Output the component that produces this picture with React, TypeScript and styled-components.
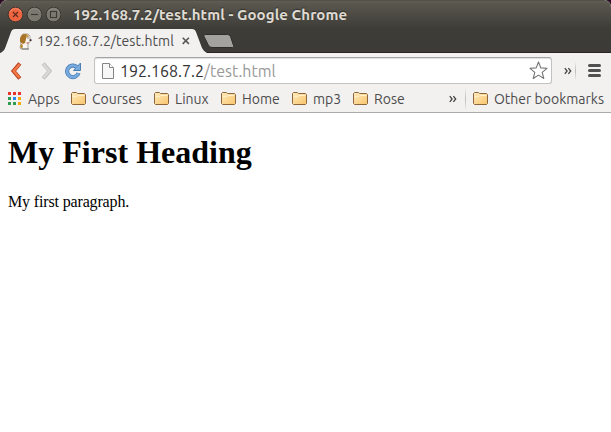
import React from 'react';
import styled, { createGlobalStyle } from 'styled-components';

const Global = createGlobalStyle`
  * { box-sizing: border-box; }
  html, body { margin: 0; background: #fff; overflow: hidden; }
  svg { display: block; flex: none; }
`;

const Browser = styled.div`
  width: 611px;
  height: 432px;
  display: flex;
  flex-direction: column;
  background: #fff;
  font-family: Ubuntu, 'Open Sans', 'Noto Sans', sans-serif;
  color: #4c4c4c;
`;

const Frame = styled.header`
  height: 53px;
  flex: none;
  background: linear-gradient(#46443e 0, #605d53 1px, #59564e 4px, #3d3c37 29px, #3c3b37 52px, #2b2522 52px);
  border-radius: 7px 7px 0 0;
  box-shadow: 0 0 0 8px #2b0a24;
  clip-path: inset(0);
`;

const TitleBar = styled.div`
  height: 29px;
  display: flex;
  align-items: center;
  padding: 1px 0 0 7px;
`;

const WindowButtons = styled.div`
  display: flex;
  gap: 3px;
  margin-right: 12px;
`;

const Label = styled.span<{ $size?: number; $width: number; $spacing?: number }>`
  display: block;
  flex: none;
  width: ${p => p.$width}px;
  font-size: ${p => p.$size ?? 14}px;
  letter-spacing: ${p => p.$spacing ?? 0}px;
  line-height: 20px;
  white-space: nowrap;
`;

const Title = styled(Label)`
  color: #dfdbd2;
  font-weight: 700;
  text-shadow: 0 -1px 1px #302e29;
`;

const TabStrip = styled.div`
  height: 24px;
  display: flex;
`;

const Tab = styled.div`
  width: 203px;
  height: 24px;
  display: grid;
  > * { grid-area: 1 / 1; }
`;

const TabContent = styled.div`
  display: flex;
  align-items: center;
  padding-left: 18px;
  gap: 4px;
`;

const Toolbar = styled.div`
  height: 33px;
  flex: none;
  background: #f2f1f0;
  display: flex;
  align-items: flex-start;
  padding: 4px 9px 0 8px;
`;

const Navigation = styled.div`
  display: flex;
  width: 86px;
  flex: none;
  padding-top: 5px;
  gap: 12px;
`;

const AddressBar = styled.div`
  width: 458px;
  height: 27px;
  flex: none;
  display: flex;
  align-items: center;
  background: #fff;
  border: 1px solid #c3c2c1;
  border-top-color: #a5a4a3;
  border-radius: 3px;
  padding: 0 3px 0 7px;
  box-shadow: inset 0 1px 1px #dedede;
`;

const Url = styled(Label)`
  color: #333;
  margin-left: 6px;
  span { color: #999; }
`;

const Star = styled.div`
  margin-left: auto;
`;

const ToolbarEnd = styled.div`
  display: flex;
  align-items: center;
  height: 27px;
  padding-left: 12px;
`;

const Divider = styled.i<{ $height: number }>`
  width: 1px;
  height: ${p => p.$height}px;
  flex: none;
  background: linear-gradient(#eee, #b9bcbd 50%, #eee);
`;

const BookmarksBar = styled.nav`
  height: 27px;
  flex: none;
  display: flex;
  align-items: center;
  padding: 0 0 1px 8px;
  background: #f2f1f0;
  border-bottom: 1px solid #aaa9a8;
`;

const Bookmark = styled.div<{ $gap?: number; $before?: number; $after?: number }>`
  display: flex;
  align-items: center;
  gap: ${p => p.$gap ?? 6}px;
  margin-left: ${p => p.$before ?? 0}px;
  margin-right: ${p => p.$after ?? 12}px;
`;

const Overflow = styled.div<{ $before?: number; $after: number }>`
  margin-left: ${p => p.$before ?? 0}px;
  margin-right: ${p => p.$after}px;
`;

const Page = styled.main`
  flex: 1;
  padding: 8px;
  color: #000;
  font-family: 'Liberation Serif', serif;
  h1 { font-size: 32px; line-height: 37px; margin: 13px 0 22px; letter-spacing: 0.02px; }
  p { font-size: 16px; line-height: 18px; margin: 0; letter-spacing: -0.15px; }
`;

const WindowButton = ({ kind }: { kind: 'close' | 'min' | 'max' }) => (
  <svg width="16" height="16" viewBox="0 0 16 16" fill="none">
    <circle cx="8.500" cy="7.500" r="7.4" fill={kind === 'close' ? '#ed6440' : '#7b7870'} stroke="#393731" />
    <path d="M3 5a6.2 6.2 0 0 1 11 0" stroke={kind === 'close' ? '#f6876a' : '#8c8981'} />
    {kind === 'close' && <path d="m6 5 5 5m0-5-5 5" stroke="#5c2a1c" strokeWidth="1.1" />}
    {kind === 'min' && <path d="M5 7.500h7" stroke="#3b3934" strokeWidth="1.1" />}
    {kind === 'max' && <path d="M5.500 4.500h6v6h-6z" stroke="#3b3934" strokeWidth="1.1" />}
  </svg>
);

const Folder = () => (
  <svg width="15" height="14" viewBox="0 0 15 14">
    <defs>
      <linearGradient id="folderFill" x2="1" y2="1">
        <stop stopColor="#ffebbd" /><stop offset="1" stopColor="#f8c46c" />
      </linearGradient>
    </defs>
    <path d="M.5 11.500V1.500L1.500.5h4l1 1h7l1 1v9l-1 1h-12z" fill="url(#folderFill)" stroke="#8d663d" />
    <path d="M1.500 4.500h4.200l1-1h6.800" fill="none" stroke="#fff0cc" />
  </svg>
);

const Chevrons = () => (
  <svg width="8" height="8" viewBox="0 0 8 8" fill="none" stroke="#444" strokeWidth="1.3">
    <path d="m.8 1.200 2.300 2.800-2.300 2.800m3.600-5.600 2.300 2.800-2.300 2.800" />
  </svg>
);

const Dog = () => (
  <svg width="15" height="17" viewBox="0 0 15 17">
    <path d="M5 1h5l2 2v3l1 1-1 2-2 1v6H3l-1-1 1-5 1-3z" fill="#f7f5ee" stroke="#77716a" strokeWidth=".6" />
    <path d="M4 1.500 8 1l1 1-1 4-1 4-2 1-3-2V5z" fill="#a87326" />
    <path d="M3 11 2 14l2 2 1-3-1-2z" fill="#b98b3b" />
    <path d="M8 1.500h2l1 2-2 1z" fill="#c99b4f" />
    <path d="M9.500 4.500h1v1h-1zm2 1.800H13.500V8h-2z" fill="#433" />
    <path d="M8.500 9.500h2v1h-2z" fill="#c4482e" />
    <path d="M4 16h7" stroke="#777" />
  </svg>
);

const Back = () => (
  <svg width="15" height="18" viewBox="0 0 15 18" fill="none">
    <path d="M11.800 1.500 5.500 9l6.300 7.500" stroke="#b84222" strokeWidth="4" />
    <path d="M11.500 2.300 5.700 9l5.800 6.700" stroke="#f37a45" strokeWidth="2.200" />
  </svg>
);

const Forward = () => (
  <svg width="17" height="18" viewBox="0 0 17 18" fill="none">
    <path d="M8.200 1.500 14.500 9l-6.300 7.500" stroke="#c3c2c0" strokeWidth="4" />
    <path d="M8.500 2.300 14.300 9l-5.800 6.700" stroke="#d9d8d6" strokeWidth="2.400" />
  </svg>
);

const Reload = () => (
  <svg width="18" height="18" viewBox="0 0 18 18" fill="none">
    <path d="M12.800 5A5.800 5.800 0 1 0 14.500 11" stroke="#4a80b7" strokeWidth="4.200" />
    <path d="M16.500 1v7.500H9.500l2.500-2.800z" fill="#78aadd" stroke="#4a80b7" />
    <path d="M13 5.200A5.800 5.800 0 1 0 14.400 11.300" stroke="#78aadd" strokeWidth="2.600" />
  </svg>
);

const AppsIcon = () => (
  <svg width="13" height="14" viewBox="0 0 13 14">
    <path d="M0 0h3v3H0zM5 0h3v3H5zM10 0h3v3h-3z" fill="#e8322d" />
    <path d="M0 5h3v3H0zM0 10h3v3H0zM5 10h3v3H5z" fill="#2d9b50" />
    <path d="M5 5h3v3H5z" fill="#268bec" />
    <path d="M10 5h3v3h-3zM10 10h3v3h-3z" fill="#f5a90a" />
  </svg>
);

const folders = [
  { name: 'Courses', width: 50 },
  { name: 'Linux', width: 34 },
  { name: 'Home', width: 38 },
  { name: 'mp3', width: 28 },
  { name: 'Rose', width: 31 },
];

export default function App() {
  return (
    <>
      <Global />
      <Browser>
        <Frame>
          <TitleBar>
            <WindowButtons>
              <WindowButton kind="close" /><WindowButton kind="min" /><WindowButton kind="max" />
            </WindowButtons>
            <Title as="div" $size={15} $spacing={0.08} $width={274}>192.168.7.2/test.html - Google Chrome</Title>
          </TitleBar>
          <TabStrip>
            <Tab>
              <svg width="207" height="24" viewBox="0 0 207 24" overflow="visible">
                <path d="M0 24C5 22 5 19 7 14L11 3q1-3 4-3h177q3 0 4 3l6 16q2 4 5 5z" fill="#f2f1f0" />
              </svg>
              <TabContent>
                <Dog />
                <Label $width={137} $spacing={0.03}>192.168.7.2/test.html</Label>
                <svg width="20" height="10" viewBox="0 0 20 10" stroke="#555" strokeWidth="1.500">
                  <path d="m4.700 1.700 6.200 6.200m0-6.200-6.200 6.200" />
                </svg>
              </TabContent>
            </Tab>
            <svg width="32" height="24" viewBox="0 0 32 24">
              <path d="M2.500 5.500h22q2 0 3 2l3 9q1 2-1 2H9q-3 0-4-3l-4-8q-1-2 1.500-2z" fill="#a3a29f" stroke="#2e2d2a" />
            </svg>
          </TabStrip>
        </Frame>
        <Toolbar>
          <Navigation><Back /><Forward /><Reload /></Navigation>
          <AddressBar>
            <svg width="12" height="16" viewBox="0 0 12 16" fill="#f7f7f7" stroke="#858585">
              <path d="M.5.5h7l4 4v11H.5z" /><path d="M7.500.5v4h4" fill="#fff" />
            </svg>
            <Url $size={16} $width={156}>192.168.7.2<span>/test.html</span></Url>
            <Star>
              <svg width="19" height="19" viewBox="0 0 19 19" fill="#fff" stroke="#757575" strokeWidth="1.1" strokeLinejoin="round">
                <path d="m9.500 1 2.300 5.900 6.200.4-4.800 4 1.600 6.200-5.300-3.400-5.300 3.400 1.600-6.200-4.800-4 6.200-.4z" />
              </svg>
            </Star>
          </AddressBar>
          <ToolbarEnd>
            <Overflow $after={3}><Chevrons /></Overflow>
            <Divider $height={18} />
            <svg width="26" height="15" viewBox="0 0 26 15" stroke="#505050" strokeWidth="3" strokeLinecap="round">
              <path d="M13.500 2.500h10m-10 5h10m-10 5h10" />
            </svg>
          </ToolbarEnd>
        </Toolbar>
        <BookmarksBar>
          <Bookmark $gap={7}><AppsIcon /><Label $width={31}>Apps</Label></Bookmark>
          {folders.map(f => (
            <Bookmark key={f.name}><Folder /><Label $width={f.width}>{f.name}</Label></Bookmark>
          ))}
          <Overflow $before={32} $after={8}><Chevrons /></Overflow>
          <Divider $height={22} />
          <Bookmark $before={7} $after={0}><Folder /><Label $width={110}>Other bookmarks</Label></Bookmark>
        </BookmarksBar>
        <Page>
          <h1>My First Heading</h1>
          <p>My first paragraph.</p>
        </Page>
      </Browser>
    </>
  );
}
